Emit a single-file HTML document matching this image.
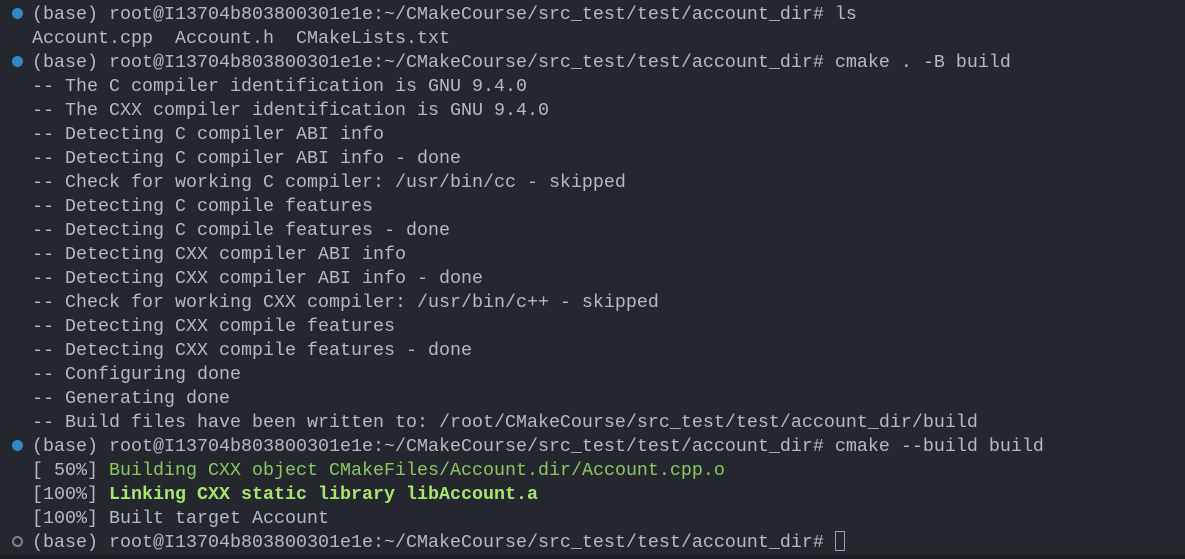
<!DOCTYPE html>
<html><head><meta charset="utf-8"><style>
html,body{margin:0;padding:0;background:#24272e;width:1185px;height:559px;overflow:hidden}
.t{position:absolute;left:32px;top:3px;font-family:"Liberation Mono",monospace;font-size:18.33px;line-height:24px;color:#b3bac6;white-space:pre}
.d{position:absolute;left:12px;width:11px;height:11px;border-radius:50%;background:#2f8ac4}
.o{position:absolute;left:12px;width:7px;height:7px;border-radius:50%;border:2px solid #7f848c}
.g{color:#8cc85f}.b{color:#a8e46e;font-weight:bold}
.c{display:inline-block;width:10px;height:20px;border:1.5px solid #9aa0a8;vertical-align:-4px;box-sizing:border-box}
.bot{position:absolute;left:0;top:555px;width:1185px;height:4px;background:#1c1e23}
</style></head><body>
<div class="d" style="top:8px"></div>
<div class="d" style="top:56px"></div>
<div class="d" style="top:440px"></div>
<div class="o" style="top:536px"></div>
<div class="t">(base) root@I13704b803800301e1e:~/CMakeCourse/src_test/test/account_dir# ls
Account.cpp  Account.h  CMakeLists.txt
(base) root@I13704b803800301e1e:~/CMakeCourse/src_test/test/account_dir# cmake . -B build
-- The C compiler identification is GNU 9.4.0
-- The CXX compiler identification is GNU 9.4.0
-- Detecting C compiler ABI info
-- Detecting C compiler ABI info - done
-- Check for working C compiler: /usr/bin/cc - skipped
-- Detecting C compile features
-- Detecting C compile features - done
-- Detecting CXX compiler ABI info
-- Detecting CXX compiler ABI info - done
-- Check for working CXX compiler: /usr/bin/c++ - skipped
-- Detecting CXX compile features
-- Detecting CXX compile features - done
-- Configuring done
-- Generating done
-- Build files have been written to: /root/CMakeCourse/src_test/test/account_dir/build
(base) root@I13704b803800301e1e:~/CMakeCourse/src_test/test/account_dir# cmake --build build
[ 50%] <span class="g">Building CXX object CMakeFiles/Account.dir/Account.cpp.o</span>
[100%] <span class="b">Linking CXX static library libAccount.a</span>
[100%] Built target Account
(base) root@I13704b803800301e1e:~/CMakeCourse/src_test/test/account_dir# <span class="c"></span></div>
<div class="bot"></div>
</body></html>
